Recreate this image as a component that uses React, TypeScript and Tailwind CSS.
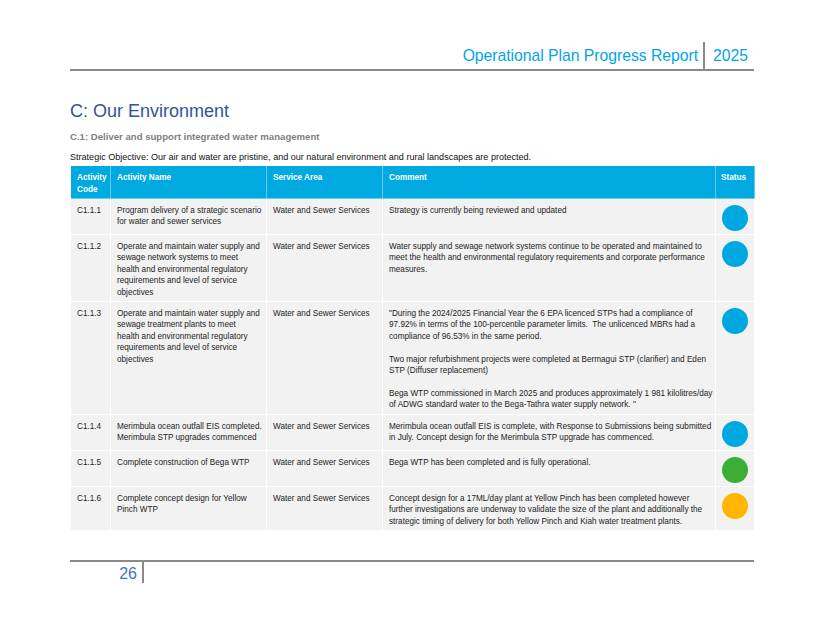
type Status = "blue" | "green" | "amber";

interface Activity {
  code: string;
  name: string;
  area: string;
  comment: string;
  status: Status;
}

const activities: Activity[] = [
  {
    code: "C1.1.1",
    name: "Program delivery of a strategic scenario\nfor water and sewer services",
    area: "Water and Sewer Services",
    comment: "Strategy is currently being reviewed and updated",
    status: "blue",
  },
  {
    code: "C1.1.2",
    name: "Operate and maintain water supply and\nsewage network systems to meet\nhealth and environmental regulatory\nrequirements and level of service\nobjectives",
    area: "Water and Sewer Services",
    comment:
      "Water supply and sewage network systems continue to be operated and maintained to\nmeet the health and environmental regulatory requirements and corporate performance\nmeasures.",
    status: "blue",
  },
  {
    code: "C1.1.3",
    name: "Operate and maintain water supply and\nsewage treatment plants to meet\nhealth and environmental regulatory\nrequirements and level of service\nobjectives",
    area: "Water and Sewer Services",
    comment:
      "\"During the 2024/2025 Financial Year the 6 EPA licenced STPs had a compliance of\n97.92% in terms of the 100-percentile parameter limits.  The unlicenced MBRs had a\ncompliance of 96.53% in the same period.\n\nTwo major refurbishment projects were completed at Bermagui STP (clarifier) and Eden\nSTP (Diffuser replacement)\n\nBega WTP commissioned in March 2025 and produces approximately 1 981 kilolitres/day\nof ADWG standard water to the Bega-Tathra water supply network. \"",
    status: "blue",
  },
  {
    code: "C1.1.4",
    name: "Merimbula ocean outfall EIS completed.\nMerimbula STP upgrades commenced",
    area: "Water and Sewer Services",
    comment:
      "Merimbula ocean outfall EIS is complete, with Response to Submissions being submitted\nin July. Concept design for the Merimbula STP upgrade has commenced.",
    status: "blue",
  },
  {
    code: "C1.1.5",
    name: "Complete construction of Bega WTP",
    area: "Water and Sewer Services",
    comment: "Bega WTP has been completed and is fully operational.",
    status: "green",
  },
  {
    code: "C1.1.6",
    name: "Complete concept design for Yellow\nPinch WTP",
    area: "Water and Sewer Services",
    comment:
      "Concept design for a 17ML/day plant at Yellow Pinch has been completed however\nfurther investigations are underway to validate the size of the plant and additionally the\nstrategic timing of delivery for both Yellow Pinch and Kiah water treatment plants.",
    status: "amber",
  },
];

const statusColor: Record<Status, string> = {
  blue: "bg-[#00a8e1]",
  green: "bg-[#3cad36]",
  amber: "bg-[#ffb600]",
};

const cell = "pl-[6px] pr-[4px] pt-[6px] pb-[3px] align-top border border-white whitespace-pre";
const head = "pl-[6px] pr-[2px] pt-[6px] pb-[2px] align-top text-left font-bold border border-white/40";

export default function App() {
  return (
    <div
      className="w-[825px] h-[637px] bg-white overflow-hidden"
      style={{ fontFamily: "'Liberation Sans', Arial, sans-serif" }}
    >
      <div className="ml-[70px] w-[684px] pt-[43px]">
        {/* running header */}
        <div className="flex justify-end items-center h-[28px] border-b-2 border-[#8a8a8a]">
          <span className="text-[15.7px] leading-[20px] text-[#00a6e6]">
            Operational Plan Progress Report
          </span>
          <span className="ml-[5px] w-[2px] h-[28px] bg-[#8a8a8a]" />
          <span className="ml-[8px] mr-[6px] text-[15.7px] leading-[20px] text-[#00a6e6]">2025</span>
        </div>

        <h1 className="mt-[29px] text-[18px] leading-[22px] text-[#2f5597]">C: Our Environment</h1>
        <h2 className="mt-[9px] text-[9.6px] leading-[12px] font-bold text-[#7f7f7f]">
          C.1: Deliver and support integrated water management
        </h2>
        <p className="mt-[9px] text-[9.05px] leading-[11px] text-[#111]">
          Strategic Objective: Our air and water are pristine, and our natural environment and rural landscapes are
          protected.
        </p>

        <table className="mt-[2px] w-[684px] table-fixed border-collapse text-[8.2px] leading-[11.4px]">
          <colgroup>
            <col className="w-[40px]" />
            <col className="w-[156px]" />
            <col className="w-[116px]" />
            <col className="w-[333px]" />
            <col className="w-[39px]" />
          </colgroup>
          <thead>
            <tr className="bg-[#00aae1] text-white leading-[12px]">
              <th className={head}>
                Activity
                <br />
                Code
              </th>
              <th className={head}>Activity Name</th>
              <th className={head}>Service Area</th>
              <th className={head}>Comment</th>
              <th className="pl-[5px] pt-[6px] pb-[2px] align-top text-left font-bold border border-white/40">
                Status
              </th>
            </tr>
          </thead>
          <tbody className="text-[#1c1c1c]">
            {activities.map((a) => (
              <tr key={a.code} className="bg-[#f2f2f2]">
                <td className={cell}>{a.code}</td>
                <td className={cell}>{a.name}</td>
                <td className={cell}>{a.area}</td>
                <td className={cell}>{a.comment}</td>
                <td className="pt-[6px] pb-[3px] align-top border border-white">
                  <div className={`mx-auto w-[26px] h-[26px] rounded-full ${statusColor[a.status]}`} />
                </td>
              </tr>
            ))}
          </tbody>
        </table>

        {/* footer */}
        <div className="mt-[29px] border-t-2 border-[#8a8a8a] flex">
          <div className="w-[72px] pt-[1px] pr-[5px] text-right text-[16px] leading-[21px] text-[#4472c4]">26</div>
          <div className="w-[2px] h-[21px] bg-[#8a8a8a]" />
        </div>
      </div>
    </div>
  );
}
